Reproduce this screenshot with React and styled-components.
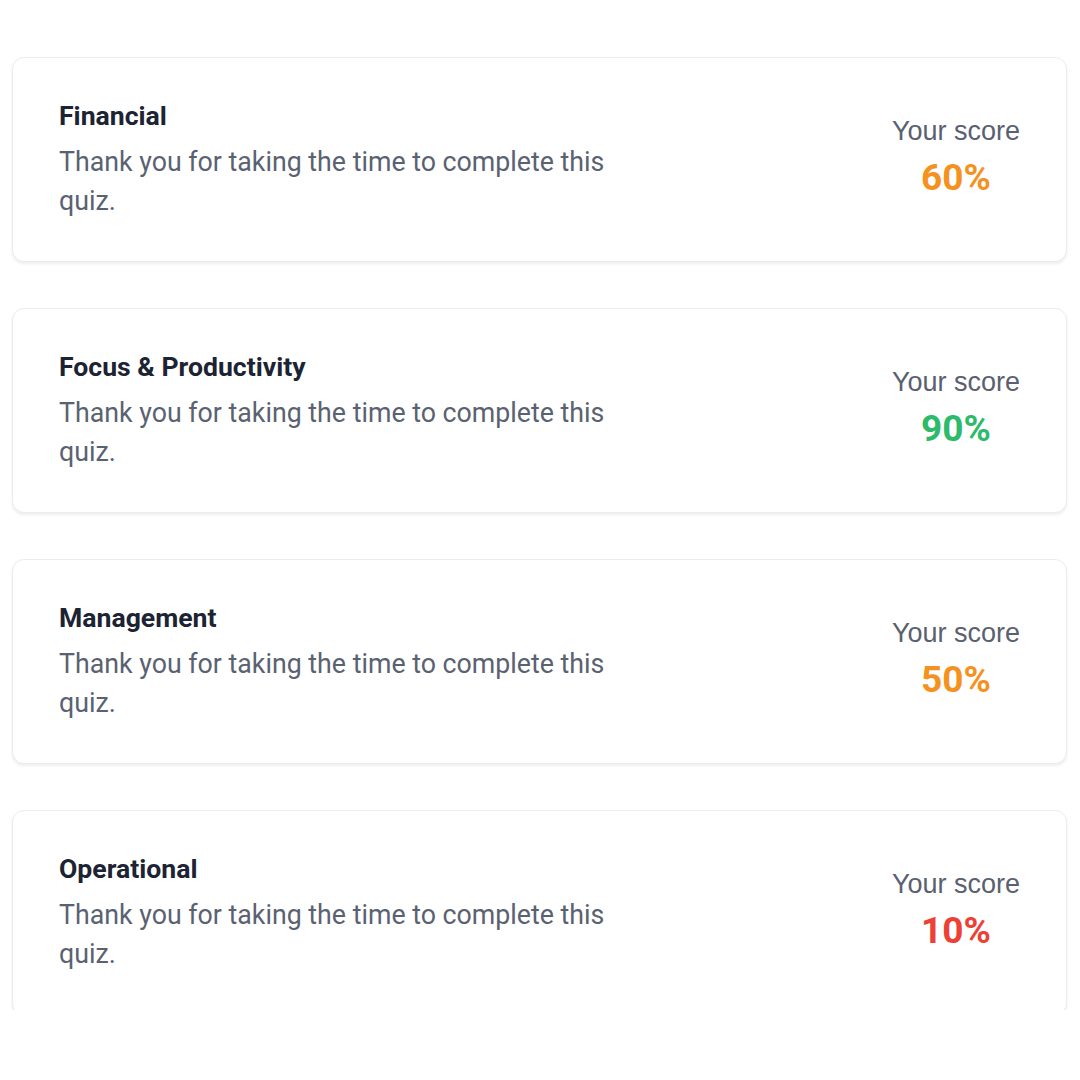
import React from 'react';
import styled, { createGlobalStyle } from 'styled-components';

const GlobalStyle = createGlobalStyle`
  body {
    margin: 0;
    background: #ffffff;
    font-family: Roboto, "Liberation Sans", sans-serif;
  }
`;

const Page = styled.div`
  height: 1010px;
  overflow: hidden;
  padding: 57px 13px 0 12px;
  box-sizing: border-box;
  display: flex;
  flex-direction: column;
  gap: 46px;
`;

const Card = styled.div`
  flex-shrink: 0;
  height: 205px;
  box-sizing: border-box;
  padding: 0 46px 0 46px;
  display: flex;
  align-items: center;
  justify-content: space-between;
  background: #fff;
  border: 1px solid #ececef;
  border-radius: 12px;
  box-shadow: 0 2px 3px rgba(0, 0, 0, 0.07);
`;

const Info = styled.div`
  display: flex;
  flex-direction: column;
  gap: 10px;
  max-width: 580px;
`;

const Title = styled.div`
  font-size: 26.6px;
  font-weight: 700;
  color: #1c2333;
  line-height: 34px;
`;

const Desc = styled.div`
  font-size: 26.75px;
  color: #5a6272;
  line-height: 39px;
`;

const Score = styled.div`
  display: flex;
  flex-direction: column;
  align-items: center;
  gap: 8px;
  margin-top: -5px;
`;

const ScoreLabel = styled.div`
  font-family: "Liberation Sans", Arial, sans-serif;
  font-size: 27px;
  color: #5a6070;
  line-height: 34px;
`;

const ScoreValue = styled.div`
  font-size: 37px;
  font-weight: 700;
  line-height: 44px;
  color: ${(p) => p.$color};
`;

const colors = {
  good: '#2dba6b',
  mid: '#f5921f',
  bad: '#ec4136',
};

const results = [
  { title: 'Financial', score: 60, level: 'mid' },
  { title: 'Focus & Productivity', score: 90, level: 'good' },
  { title: 'Management', score: 50, level: 'mid' },
  { title: 'Operational', score: 10, level: 'bad' },
];

const App = () => {
  return (
    <>
      <GlobalStyle />
      <Page>
        {results.map((r) => (
          <Card key={r.title}>
            <Info>
              <Title>{r.title}</Title>
              <Desc>Thank you for taking the time to complete this quiz.</Desc>
            </Info>
            <Score>
              <ScoreLabel>Your score</ScoreLabel>
              <ScoreValue $color={colors[r.level]}>{r.score}%</ScoreValue>
            </Score>
          </Card>
        ))}
      </Page>
    </>
  );
};

export default App;
